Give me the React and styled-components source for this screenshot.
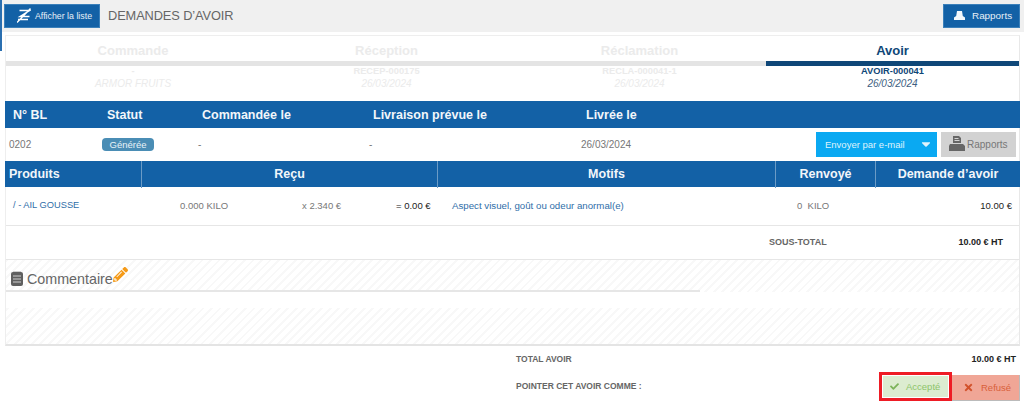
import React from "react";
import styled, { createGlobalStyle } from "styled-components";
import { FaCheck, FaTimes, FaPencilAlt, FaCaretDown } from "react-icons/fa";

const Global = createGlobalStyle`
  html, body { margin: 0; padding: 0; background: #fff; }
  body { font-family: "Liberation Sans", Arial, sans-serif; width: 1024px; height: 410px; overflow: hidden; color: #666; }
  * { box-sizing: border-box; }
`;
const hatch = `repeating-linear-gradient(135deg, #f8f8f8 0 2px, #fff 2px 6px)`;
const Page = styled.div`width: 1024px; height: 410px; display: flex; flex-direction: column; position: relative;`;
const Strip = styled.div`position: absolute; left: 0; top: 0; width: 2px; height: 51px; background: #2a6fb0;`;
const TopBar = styled.header`height: 32px; background: #f0f0f0; display: flex; align-items: center; padding: 0 4px 1px 4px;`;
const BlueBtn = styled.button`
  height: 24px; background: #1361a6; color: #e8f0f7; border: 1px solid #3b80ba; padding: 0 0 0 ${p => p.$pad}px; white-space: nowrap; flex: none;
  display: flex; align-items: center; gap: ${p => p.$gap}px; font: 400 ${p => p.$fs}px "Liberation Sans", sans-serif; width: ${p => p.$w}px;
`;
const Title = styled.h1`font: 400 12.8px "Liberation Sans", sans-serif; color: #666; margin: 0 0 0 8px; flex: 1; letter-spacing: -.1px;`;
const Panel = styled.main`flex: 0 0 311px; margin: 3px 4px 0 5px; border: 1px solid #eee; border-bottom: 2px solid #e4e4e4; border-right: 1px solid #e8e8e8; display: flex; flex-direction: column;`;
const Steps = styled.section`height: 65px; display: grid; grid-template-columns: 254px repeat(3, 253px);`;
const Step = styled.div`
  display: flex; flex-direction: column; align-items: center; color: ${p => p.$on ? "#0f4778" : "#ebebeb"};
`;
const StepName = styled.div`font: 700 13px/16px "Liberation Sans", sans-serif; padding-top: 7px; height: 25px;`;
const StepBar = styled.div`align-self: stretch; height: 5px; background: ${p => p.$on ? "#0f4778" : "#e4e4e4"};`;
const StepRef = styled.div`font: 700 9.3px/11px "Liberation Sans", sans-serif; margin-top: 0; min-height: 11px;`;
const StepDate = styled.div`font: italic 400 10px/12px "Liberation Sans", sans-serif; margin-top: 1px; color: ${p => p.$on ? "#3e5f82" : "#ebebeb"};`;
const InfoHead = styled.div`height: 27px; background: #1361a6; display: grid; grid-template-columns: 102px 95px 171px 213px 1fr; margin: 0 0 0 -1px; width: 1015px; color: #f2f6fa; font: 700 12.5px/26px "Liberation Sans", sans-serif; padding-top: 1px; & > span:first-child { padding-left: 8px; }`;
const InfoRow = styled.div`height: 33px; display: flex; align-items: center; font-size: 10px; color: #777; position: relative; margin-left: -1px;`;
const Cell = styled.span`width: ${p => p.$w}px; flex: none; padding-left: ${p => p.$p || 0}px;`;
const Badge = styled.span`display: inline-block; width: 52px; height: 13px; border-radius: 4px; background: #4a8db5; color: #e8f2f7; text-align: center; font: 9.5px/13px "Liberation Sans", sans-serif;`;
const Actions = styled.div`margin-left: auto; display: flex; gap: 4px; padding-right: 3px; margin-top: -1px;`;
const Dropdown = styled.button`width: 121px; height: 25px; background: #0aa9f2; color: #dff3fc; border: none; font: 9.5px "Liberation Sans", sans-serif; display: flex; align-items: center; padding: 0 4px 0 9px; justify-content: space-between;`;
const GreyBtn = styled.button`width: 75px; height: 25px; background: #d2d2d2; color: #777; border: none; font: 10px "Liberation Sans", sans-serif; display: flex; align-items: center; gap: 2px; padding: 0 0 0 8px;`;
const TableHead = styled.div`height: 26px; background: #1361a6; display: grid; grid-template-columns: 137px 296px 338px 100px 144px; margin-left: -1px; width: 1015px; color: #f2f6fa; font: 700 12.5px/27px "Liberation Sans", sans-serif;`;
const Th = styled.div`text-align: ${p => p.$left ? "left" : "center"}; padding-left: ${p => p.$left ? 4 : 0}px; border-right: ${p => p.$last ? "none" : "1px solid #6b9bc6"};`;
const Row = styled.div`height: 39px; border-bottom: 1px solid #e6e6e6; display: flex; align-items: center; font-size: 9.5px; position: relative; padding-bottom: 2px;`;
const Val = styled.span`flex: none; width: ${p => p.$w}px; text-align: ${p => p.$a || "left"}; color: ${p => p.$c || "#777"}; padding-left: ${p => p.$p || 0}px; font-size: ${p => p.$fs || 9.5}px; font-weight: ${p => p.$b ? 700 : 400}; white-space: nowrap;`;
const SubTotal = styled.div`height: 34px; border-bottom: 1px solid #e6e6e6; display: flex; align-items: center; justify-content: flex-end; color: #666; font-weight: 700; padding-right: 16px; padding-bottom: 2px;`;
const CommentHead = styled.div`height: 32px; border-bottom: 2px solid #e6e6e6; width: 694px; display: flex; align-items: center; padding: 8px 0 0 5px; gap: 4px; font: 400 14.3px "Liberation Sans", sans-serif; color: #666;`;
const HatchTop = styled.div`height: 32px; background: ${hatch}; position: relative;`;
const HatchRest = styled.div`flex: 1; background: linear-gradient(#fff 0 16px, transparent 16px), ${hatch};`;
const Footer = styled.footer`flex: 1; position: relative; display: flex; flex-direction: column; padding: 0 4px 0 516px; font: 700 8.5px "Liberation Sans", sans-serif; color: #666;`;
const FootRow = styled.div`display: flex; align-items: center; justify-content: space-between; height: ${p => p.$h}px; padding-right: ${p => p.$r || 0}px;`;
const Big = styled.span`font-size: 9px; color: #222;`;
const Pair = styled.div`display: flex; align-items: flex-end;`;
const Accept = styled.div`width: 73px; height: 29px; border: 3px solid #ee1c25; padding: 1px; display:flex; background:#fff;`;
const AcceptIn = styled.div`flex:1; background: #dcecd0; display:flex; align-items:center; gap: 7px; padding-left: 7px; color: #8cc46a; font: 400 9.5px "Liberation Sans", sans-serif;`;
const Refuse = styled.div`width: 68px; height: 26px; background: #f0a696; display:flex; align-items:center; gap: 7px; padding-left: 11px; color: #d9603a; font: 400 9.5px "Liberation Sans", sans-serif; border-bottom: 1px solid #bbb; border-right: 1px solid #bbb;`;
const NoteWrap = styled.span`display: flex; margin-top: -2px;`;
const PencilWrap = styled.span`display: flex; margin: -9px 0 0 -4px;`;

const ListIcon = () => (
  <svg width="14" height="15" viewBox="0 0 14 15" fill="none" stroke="#fff" strokeWidth="1.4">
    <path d="M2.5 2.500h10L3 8.500h9.500M1 11.500h10M0 14.500l13.500-14" />
  </svg>
);
const HatIcon = () => (
  <svg width="11" height="9" viewBox="0 0 11 9" fill="#f4f8fb"><path d="M3 0h5l.8 5 2.200 1.500V9H0V6.500L2.200 5z" /></svg>
);
const NoteIcon = () => (
  <svg width="12" height="15" viewBox="0 0 12 15"><rect y="1" width="12" height="14" rx="2" fill="#5f5f5f" /><path d="M2 .5h8M2 5h8M2 8h8M2 11h8" stroke="#cfcfcf" strokeWidth="1" /></svg>
);
const PrinterIcon = () => (
  <svg width="16" height="16" viewBox="0 0 16 16" fill="#666"><path d="M4 0h6l2 2v5H4z" /><path d="M1 8h13l2 2v5H0v-5z" /><path d="M5.500 2.500h4M5.500 4.500h5" stroke="#d2d2d2" /></svg>
);

const steps = [
  ["Commande", "-", "ARMOR FRUITS"],
  ["Réception", "RECEP-000175", "26/03/2024"],
  ["Réclamation", "RECLA-000041-1", "26/03/2024"],
  ["Avoir", "AVOIR-000041", "26/03/2024", true],
];

export default function App() {
  return (
    <Page>
      <Global />
      <Strip />
      <TopBar>
        <BlueBtn $w={96} $pad={12} $gap={4} $fs={8.8}><ListIcon />Afficher la liste</BlueBtn>
        <Title>DEMANDES D’AVOIR</Title>
        <BlueBtn $w={77} $pad={10} $gap={7} $fs={9.9}><HatIcon />Rapports</BlueBtn>
      </TopBar>
      <Panel>
        <Steps>
          {steps.map(([n, r, d, on]) => (
            <Step key={n} $on={on}>
              <StepName>{n}</StepName>
              <StepBar $on={on} />
              <StepRef $on={on}>{r}</StepRef>
              <StepDate $on={on}>{d}</StepDate>
            </Step>
          ))}
        </Steps>
        <InfoHead>
          <span>N° BL</span><span>Statut</span><span>Commandée le</span><span>Livraison prévue le</span><span>Livrée le</span>
        </InfoHead>
        <InfoRow>
          <Cell $w={97} $p={4}>0202</Cell>
          <Cell $w={96}><Badge>Générée</Badge></Cell>
          <Cell $w={171}>-</Cell>
          <Cell $w={212}>-</Cell>
          <Cell $w={100}>26/03/2024</Cell>
          <Actions>
            <Dropdown>Envoyer par e-mail <FaCaretDown size={14} /></Dropdown>
            <GreyBtn><PrinterIcon />Rapports</GreyBtn>
          </Actions>
        </InfoRow>
        <TableHead>
          <Th $left>Produits</Th><Th>Reçu</Th><Th>Motifs</Th><Th>Renvoyé</Th><Th $last>Demande d’avoir</Th>
        </TableHead>
        <Row>
          <Val $w={174} $p={7} $c="#2f6ea8" $fs={9.3}>/ - AIL GOUSSE</Val>
          <Val $w={122} $c="#777">0.000 KILO</Val>
          <Val $w={94} $c="#777">x 2.340 €</Val>
          <Val $w={56} $c="#222">= 0.00 €</Val>
          <Val $w={345} $c="#2f6ea8" $fs={9.7}>Aspect visuel, goût ou odeur anormal(e)</Val>
          <Val $w={34}>0 &nbsp;KILO</Val>
          <Val $w={181} $a="right" $c="#222">10.00 €</Val>
        </Row>
        <SubTotal>
          <Val $w={173} $c="#666" $b $fs={9}>SOUS-TOTAL</Val>
          <Val $w={61} $a="right" $c="#222" $b $fs={9}>10.00 € HT</Val>
        </SubTotal>
        <HatchTop>
          <CommentHead>
            <NoteWrap><NoteIcon /></NoteWrap>Commentaire<PencilWrap><FaPencilAlt size={15} color="#f59a17" /></PencilWrap>
          </CommentHead>
        </HatchTop>
        <HatchRest />
      </Panel>
      <Footer>
        <FootRow $h={25} $r={4}><span>TOTAL AVOIR</span><Big>10.00 € HT</Big></FootRow>
        <FootRow $h={30}>
          <span>POINTER CET AVOIR COMME :</span>
          <Pair>
            <Accept><AcceptIn><FaCheck size={9} color="#7cb35a" />Accepté</AcceptIn></Accept>
            <Refuse><FaTimes size={11} color="#d2522c" />Refusé</Refuse>
          </Pair>
        </FootRow>
      </Footer>
    </Page>
  );
}
